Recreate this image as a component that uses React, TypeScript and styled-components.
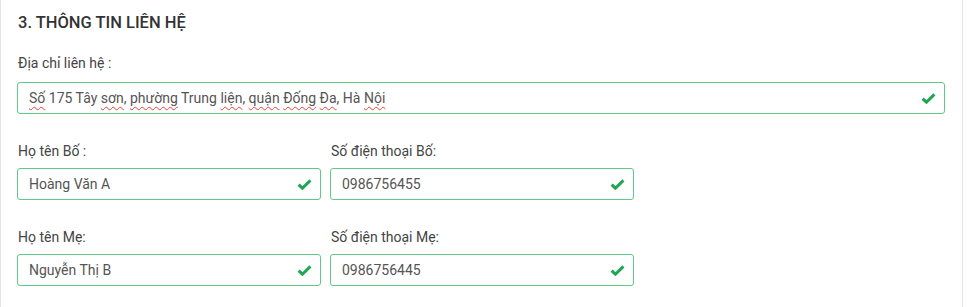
import React from "react";
import styled, { createGlobalStyle } from "styled-components";

const GlobalStyle = createGlobalStyle`
  html, body {
    margin: 0;
    padding: 0;
    background: #fff;
    font-family: Roboto, "Noto Sans", "Liberation Sans", sans-serif;
  }
`;

const Panel = styled.section`
  box-sizing: border-box;
  width: 963px;
  min-height: 307px;
  border-left: 1px solid #e4e4e4;
  border-right: 1px solid #e4e4e4;
  padding: 11px 17px 0 16px;
  background: #fff;
`;

const Heading = styled.h3`
  margin: 0 0 18px 1px;
  font-size: 16.5px;
  line-height: 24px;
  font-weight: 500;
  color: #333;
`;

const Row = styled.div<{ $cols?: number }>`
  display: grid;
  grid-template-columns: ${(p) => (p.$cols === 2 ? "304px 304px" : "1fr")};
  column-gap: 9px;
  margin-bottom: 27px;

  &:last-child {
    margin-bottom: 0;
  }
`;

const Field = styled.div`
  display: flex;
  flex-direction: column;
`;

const Label = styled.label<{ $gap?: number }>`
  margin: 0 0 ${(p) => p.$gap ?? 7}px 1px;
  font-size: 14px;
  line-height: 20px;
  color: #444;
`;

const InputBox = styled.div`
  box-sizing: border-box;
  height: 32px;
  display: flex;
  align-items: center;
  justify-content: space-between;
  padding: 0 8px 0 11px;
  border: 1px solid #5ccb88;
  border-radius: 3px;
  background: #fff;
`;

const Value = styled.span`
  font-size: 14px;
  color: #555;
  white-space: nowrap;
`;

const Typo = styled.span`
  text-decoration: underline wavy #e8413a;
  text-decoration-thickness: 1px;
  text-underline-offset: 3px;
`;

const Check = () => (
  <svg width="15" height="11" viewBox="0 0 15 11" aria-hidden>
    <path
      d="M1.6 5.6 L5.4 9.2 L13.4 1.4"
      fill="none"
      stroke="#1fa652"
      strokeWidth="3"
      strokeLinejoin="miter"
    />
  </svg>
);

const Input = ({ children }: { children: React.ReactNode }) => (
  <InputBox>
    <Value>{children}</Value>
    <Check />
  </InputBox>
);

export default function App() {
  return (
    <>
      <GlobalStyle />
      <Panel>
        <Heading>3. THÔNG TIN LIÊN HỆ</Heading>
        <Row>
          <Field>
            <Label $gap={9}>Địa chỉ liên hệ :</Label>
            <Input>
              <Typo>Số</Typo> 175 Tây <Typo>sơn</Typo>, <Typo>phường</Typo> Trung{" "}
              <Typo>liện</Typo>, <Typo>quận</Typo> <Typo>Đống</Typo>{" "}
              <Typo>Đa</Typo>, Hà <Typo>Nội</Typo>
            </Input>
          </Field>
        </Row>
        <Row $cols={2}>
          <Field>
            <Label>Họ tên Bố :</Label>
            <Input>Hoàng Văn A</Input>
          </Field>
          <Field>
            <Label>Số điện thoại Bố:</Label>
            <Input>0986756455</Input>
          </Field>
        </Row>
        <Row $cols={2}>
          <Field>
            <Label>Họ tên Mẹ:</Label>
            <Input>Nguyễn Thị B</Input>
          </Field>
          <Field>
            <Label>Số điện thoại Mẹ:</Label>
            <Input>0986756445</Input>
          </Field>
        </Row>
      </Panel>
    </>
  );
}
